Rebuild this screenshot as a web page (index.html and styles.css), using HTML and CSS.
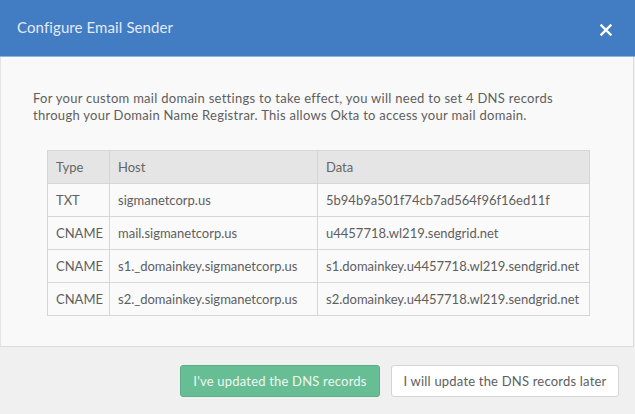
FILE: index.html
```html
<!DOCTYPE html>
<html>
<head>
<meta charset="utf-8">
<link rel="stylesheet" href="styles.css">
</head>
<body>
<div class="modal">
  <div class="header">
    <h1 class="title">Configure Email Sender</h1>
    <svg class="close" width="12" height="12" viewBox="0 0 12 12"><path d="M1.5 1.5 L10.5 10.5 M10.5 1.5 L1.5 10.5" stroke="#fff" stroke-width="2.4" stroke-linecap="square"/></svg>
  </div>
  <div class="body">
    <p class="intro">For your custom mail domain settings to take effect, you will need to set 4 DNS records<br>through your Domain Name Registrar. This allows Okta to access your mail domain.</p>
    <table class="dns">
      <colgroup><col class="c-type"><col class="c-host"><col class="c-data"></colgroup>
      <thead>
        <tr><th>Type</th><th>Host</th><th>Data</th></tr>
      </thead>
      <tbody>
        <tr><td>TXT</td><td>sigmanetcorp.us</td><td>5b94b9a501f74cb7ad564f96f16ed11f</td></tr>
        <tr><td>CNAME</td><td>mail.sigmanetcorp.us</td><td>u4457718.wl219.sendgrid.net</td></tr>
        <tr><td>CNAME</td><td>s1._domainkey.sigmanetcorp.us</td><td>s1.domainkey.u4457718.wl219.sendgrid.net</td></tr>
        <tr><td>CNAME</td><td>s2._domainkey.sigmanetcorp.us</td><td>s2.domainkey.u4457718.wl219.sendgrid.net</td></tr>
      </tbody>
    </table>
  </div>
  <div class="footer">
    <button class="btn btn-primary">I've updated the DNS records</button>
    <button class="btn btn-default">I will update the DNS records later</button>
  </div>
</div>
</body>
</html>
```
FILE: styles.css
```css
html, body {
  margin: 0;
  padding: 0;
}
body {
  width: 635px;
  height: 414px;
  background: #f0f0f0;
  font-family: Lato, "Open Sans", sans-serif;
  color: #5e5e5e;
  overflow: hidden;
}
.modal {
  display: flex;
  flex-direction: column;
  height: 414px;
}
.header {
  height: 56px;
  background: #427cc3;
  border-bottom: 1px solid #8fb2de;
  display: flex;
  align-items: center;
  justify-content: space-between;
  padding: 0 23px 0 17px;
  box-sizing: content-box;
}
.title {
  margin: 0;
  font-size: 15px;
  font-weight: 400;
  letter-spacing: 0.1px;
  color: #e2eaf6;
  padding-bottom: 3px;
}
.close {
  display: block;
  margin-top: 4px;
}
.body {
  background: #f9f9f9;
  border: 1px solid #dcdcdc;
  border-top: none;
  border-left-color: #e4e4e4;
  height: 290px;
  box-sizing: border-box;
  padding: 33px 20px 0 32px;
  margin-right: 1px;
}
.intro {
  margin: 0;
  font-size: 13px;
  line-height: 17px;
  letter-spacing: 0.28px;
  color: #5e5e5e;
  white-space: nowrap;
}
.dns {
  margin: 26px 0 0 14px;
  width: 542px;
  table-layout: fixed;
  border-collapse: collapse;
  font-size: 13px;
  letter-spacing: 0;
  color: #5e5e5e;
}
.c-type { width: 62px; }
.c-host { width: 208px; }
.c-data { width: 272px; }
.dns th, .dns td {
  border: 1px solid #d6d6d6;
  text-align: left;
  padding: 0 8px;
  height: 33px;
  box-sizing: border-box;
  white-space: nowrap;
  overflow: hidden;
}
.dns th {
  background: #e5e5e5;
  font-weight: 400;
  color: #666;
}
.dns td {
  background: #fafafa;
}
.footer {
  flex: 1;
  display: flex;
  justify-content: flex-end;
  align-items: flex-start;
  gap: 11px;
  padding: 18px 16px 0 0;
}
.btn {
  font-family: Lato, "Open Sans", sans-serif;
  font-size: 13px;
  letter-spacing: 0.2px;
  height: 32px;
  padding: 0 6px;
  border-radius: 3px;
  cursor: pointer;
  white-space: nowrap;
}
.btn-primary {
  background: #68be94;
  border: 1px solid #5aae84;
  color: #eef7f2;
  width: 200px;
}
.btn-default {
  background: #ffffff;
  border: 1px solid #d4d4d4;
  color: #5e5e5e;
  width: 228px;
}
```
